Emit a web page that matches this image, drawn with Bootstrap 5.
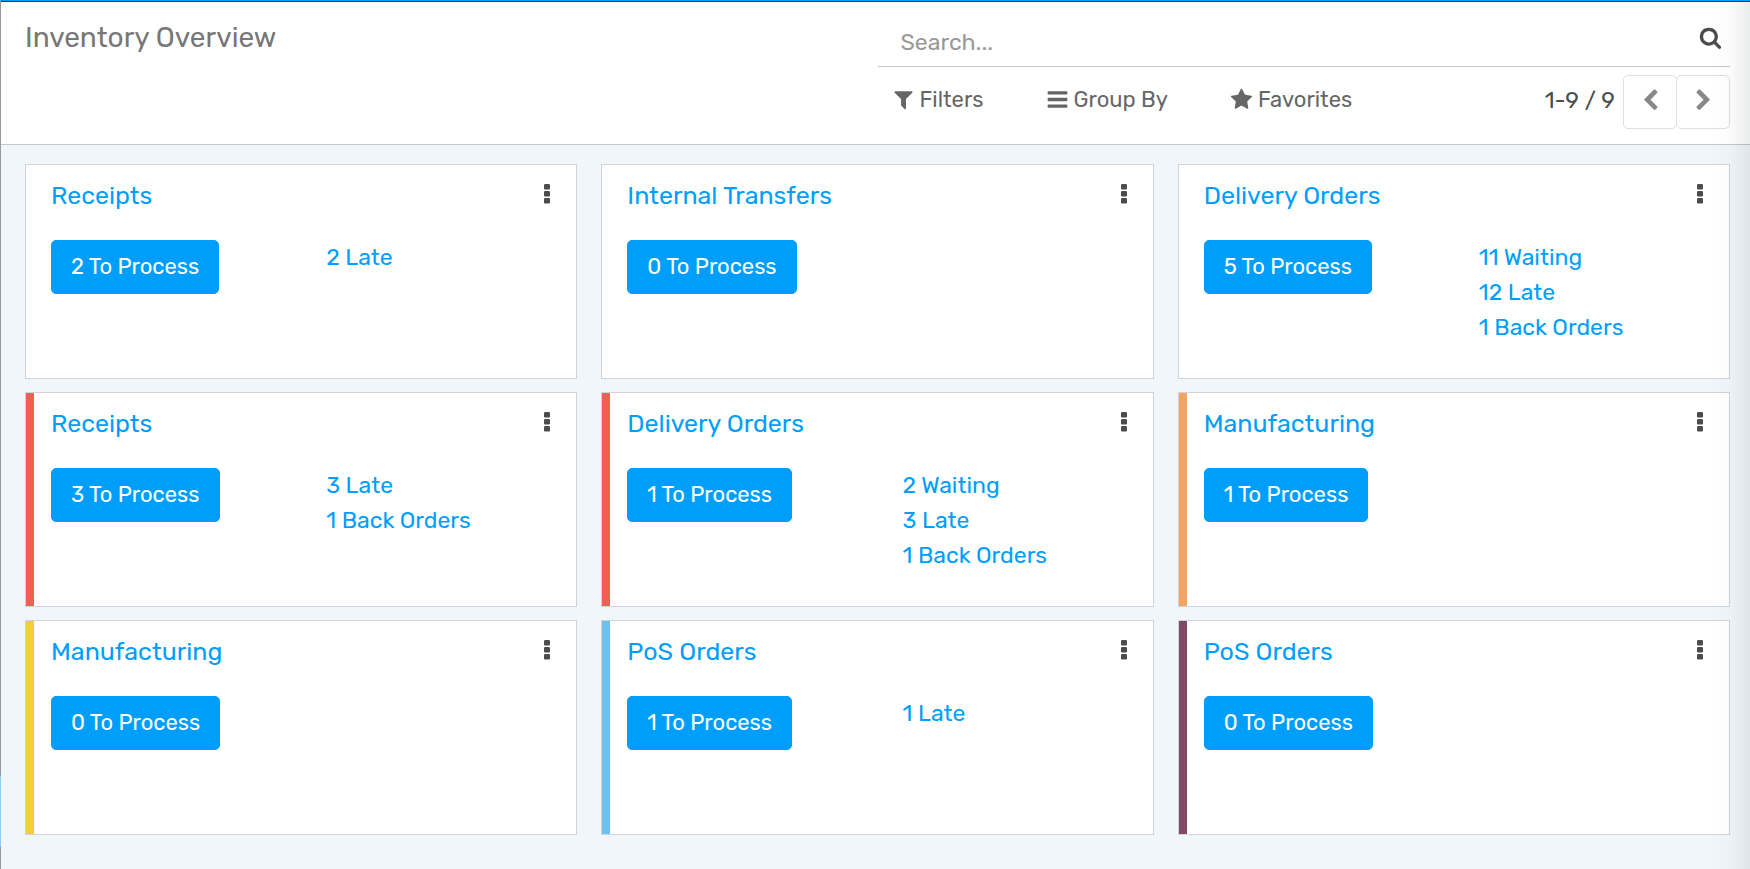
<!DOCTYPE html>
<html lang="en">
<head>
<meta charset="utf-8">
<meta name="viewport" content="width=device-width, initial-scale=1">
<title>Inventory Overview</title>
<link href="https://cdn.jsdelivr.net/npm/bootstrap@5.3.0/dist/css/bootstrap.min.css" rel="stylesheet">
<style>
  :root { --accent: #009efb; --edge: #ced4da; }
  body { font-family: Rubik, Roboto, "Liberation Sans", sans-serif; font-size: 23px; line-height: 35px; color: #4c4c4c; background: #f1f6fb; }
  .app-shell { border-top: 1px solid var(--accent); border-left: 1px solid #999; }
  .scroll-mark { left: -1px; bottom: 23px; width: 1px; height: 71px; background: #87cefa; }
  .edge-shade { width: 40px; background: linear-gradient(to right, rgba(40, 50, 60, 0), rgba(40, 50, 60, .02) 50%, rgba(40, 50, 60, .09)); }
  .control-panel { border-top: 1px solid #1f3a55; border-bottom: 1px solid #c4c8cc; padding: 0 20px 15px 24px; }
  .panel-title { font-size: 28px; line-height: 36px; color: #777; margin-top: 18px; }
  .search-line { border-bottom: 1px solid #c8c8c8; height: 65px; padding: 6px 8px 0 15px; }
  .search-line input { font-size: 23px; color: #4c4c4c; padding: 10px 8px 0; }
  .search-line input::placeholder { color: #999; opacity: 1; }
  .search-line input:focus { box-shadow: none; }
  .tool-btn { font-size: 22px; line-height: 35px; color: #666; padding: 0; gap: 5px; }
  .tool-set { gap: 62px; padding: 15px 0 0 14px; }
  .glyph { width: 23px; height: 23px; fill: currentColor; flex: none; }
  .page-btn { width: 54px; height: 54px; border: 1px solid #dfdfdf; border-radius: 5px; color: #888; background: #fff; padding: 0 0 3px; }
  .page-btn + .page-btn { margin-left: -1px; }
  .board { padding: 19px 20px 35px 24px; }
  .board-grid { display: grid; grid-template-columns: repeat(3, minmax(0, 1fr)); gap: 13px 24px; }
  .op-card { border: 1px solid var(--edge); border-radius: 0; min-height: 215px; padding: 13px 0 24px; }
  .op-card[class*="tone-"]::before { content: ""; position: absolute; left: 0; top: 0; bottom: 0; width: 8px; background: var(--tone); }
  .tone-red { --tone: #f06050; }
  .tone-orange { --tone: #f4a460; }
  .tone-yellow { --tone: #f5cd3b; }
  .tone-sky { --tone: #6cc1ed; }
  .tone-plum { --tone: #814968; }
  .op-head { padding: 0 25px 0 25px; }
  .op-menu { padding: 6px 0 0; }
  .op-title { font-size: 25px; line-height: 35px; }
  .op-card a { color: var(--accent); text-decoration: none; }
  .dots { width: 8px; height: 20px; fill: #4c4c4c; display: block; }
  .op-body { margin-top: 27px; }
  .op-body > div { padding-left: 25px; }
  .go-btn { --bs-btn-bg: var(--accent); --bs-btn-border-color: var(--accent); font-size: 22px; line-height: 34px; padding: 9px 19px; border-radius: 5px; }
</style>
</head>
<body>
<svg class="d-none" aria-hidden="true">
  <symbol id="i-filter" viewBox="192 0 1408 1792"><path d="M1595 295q17 41-14 70l-493 493v742q0 42-39 59-13 5-25 5-27 0-45-19l-256-256q-19-19-19-45v-486l-493-493q-31-29-14-70 17-39 59-39h1280q42 0 59 39z"/></symbol>
  <symbol id="i-bars" viewBox="0 0 1792 1792"><path d="M1664 1344v128q0 26-19 45t-45 19h-1408q-26 0-45-19t-19-45v-128q0-26 19-45t45-19h1408q26 0 45 19t19 45zm0-512v128q0 26-19 45t-45 19h-1408q-26 0-45-19t-19-45v-128q0-26 19-45t45-19h1408q26 0 45 19t19 45zm0-512v128q0 26-19 45t-45 19h-1408q-26 0-45-19t-19-45v-128q0-26 19-45t45-19h1408q26 0 45 19t19 45z"/></symbol>
  <symbol id="i-star" viewBox="0 0 1792 1792"><path d="M1728 647q0 22-26 48l-363 354 86 500q1 7 1 20 0 21-10.5 35.5t-30.5 14.5q-19 0-40-12l-449-236-449 236q-22 12-40 12-21 0-31.5-14.5t-10.5-35.5q0-6 2-20l86-500-364-354q-25-27-25-48 0-37 56-46l502-73 225-455q19-41 49-41t49 41l225 455 502 73q56 9 56 46z"/></symbol>
  <symbol id="i-search" viewBox="0 0 1792 1792"><path d="M1216 832q0-185-131.5-316.5t-316.5-131.5-316.5 131.5-131.5 316.5 131.5 316.5 316.5 131.5 316.5-131.5 131.5-316.5zm512 832q0 52-38 90t-90 38q-54 0-90-38l-343-342q-179 124-399 124-143 0-273.5-55.5t-225-150-150-225-55.5-273.5 55.5-273.5 150-225 225-150 273.5-55.5 273.5 55.5 225 150 150 225 55.5 273.5q0 220-124 399l343 343q37 37 37 90z"/></symbol>
  <symbol id="i-left" viewBox="0 0 1792 1792"><path d="M1427 301l-531 531 531 531q19 19 19 45t-19 45l-166 166q-19 19-45 19t-45-19l-742-742q-19-19-19-45t19-45l742-742q19-19 45-19t45 19l166 166q19 19 19 45t-19 45z"/></symbol>
  <symbol id="i-right" viewBox="0 0 1792 1792"><path d="M1363 877l-742 742q-19 19-45 19t-45-19l-166-166q-19-19-19-45t19-45l531-531-531-531q-19-19-19-45t19-45l166-166q19-19 45-19t45 19l742 742q19 19 19 45t-19 45z"/></symbol>
  <symbol id="i-dots" viewBox="0 0 8 20"><rect x="1" y="0" width="6" height="5.6" rx="1.3"/><rect x="1" y="7" width="6" height="5.6" rx="1.3"/><rect x="1" y="14" width="6" height="5.6" rx="1.3"/></symbol>
</svg>

<div class="app-shell position-relative min-vh-100">
  <header class="control-panel bg-white">
    <div class="row g-0">
      <div class="col-6"><h1 class="panel-title fw-normal mb-0">Inventory Overview</h1></div>
      <div class="col-6">
        <form class="search-line d-flex align-items-center" role="search">
          <input class="form-control border-0 bg-transparent" type="text" placeholder="Search..." aria-label="Search">
          <button class="btn p-0 border-0 d-flex" type="button" aria-label="Run search"><svg class="glyph" style="color:#4c4c4c"><use href="#i-search"/></svg></button>
        </form>
        <div class="d-flex justify-content-between align-items-start">
          <div class="tool-set d-flex">
            <button class="btn tool-btn border-0 d-flex align-items-center" type="button"><svg class="glyph"><use href="#i-filter"/></svg>Filters</button>
            <button class="btn tool-btn border-0 d-flex align-items-center" type="button"><svg class="glyph"><use href="#i-bars"/></svg>Group By</button>
            <button class="btn tool-btn border-0 d-flex align-items-center" type="button"><svg class="glyph"><use href="#i-star"/></svg>Favorites</button>
          </div>
          <nav class="d-flex pt-2 mt-n1" aria-label="Pager">
            <span class="pe-2 pt-2">1-9 / 9</span>
            <button class="btn page-btn d-flex align-items-center justify-content-center" type="button" aria-label="Previous"><svg class="glyph"><use href="#i-left"/></svg></button>
            <button class="btn page-btn d-flex align-items-center justify-content-center" type="button" aria-label="Next"><svg class="glyph"><use href="#i-right"/></svg></button>
          </nav>
        </div>
      </div>
    </div>
  </header>

  <main class="board">
    <div class="board-grid" id="board"></div>
  </main>
  <div class="scroll-mark position-absolute"></div>
  <div class="edge-shade position-absolute top-0 end-0 bottom-0 pe-none"></div>
</div>

<script src="https://cdn.jsdelivr.net/npm/bootstrap@5.3.0/dist/js/bootstrap.bundle.min.js"></script>
<script>
  const operations = [
    ["Receipts", 2, ["2 Late"], ""],
    ["Internal Transfers", 0, [], ""],
    ["Delivery Orders", 5, ["11 Waiting", "12 Late", "1 Back Orders"], ""],
    ["Receipts", 3, ["3 Late", "1 Back Orders"], "tone-red"],
    ["Delivery Orders", 1, ["2 Waiting", "3 Late", "1 Back Orders"], "tone-red"],
    ["Manufacturing", 1, [], "tone-orange"],
    ["Manufacturing", 0, [], "tone-yellow"],
    ["PoS Orders", 1, ["1 Late"], "tone-sky"],
    ["PoS Orders", 0, [], "tone-plum"]
  ];
  document.getElementById("board").innerHTML = operations.map(([title, count, links, tone]) => `
    <article class="card op-card ${tone}">
      <div class="op-head d-flex justify-content-between">
        <h2 class="op-title fw-normal mb-0"><a href="#">${title}</a></h2>
        <button class="btn op-menu border-0 align-self-start" type="button" aria-label="Options"><svg class="dots"><use href="#i-dots"/></svg></button>
      </div>
      <div class="row g-0 op-body">
        <div class="col-6"><button class="btn btn-primary go-btn" type="button">${count} To Process</button></div>
        <div class="col-6">${links.map(l => `<div><a href="#">${l}</a></div>`).join("")}</div>
      </div>
    </article>`).join("");
</script>
</body>
</html>
